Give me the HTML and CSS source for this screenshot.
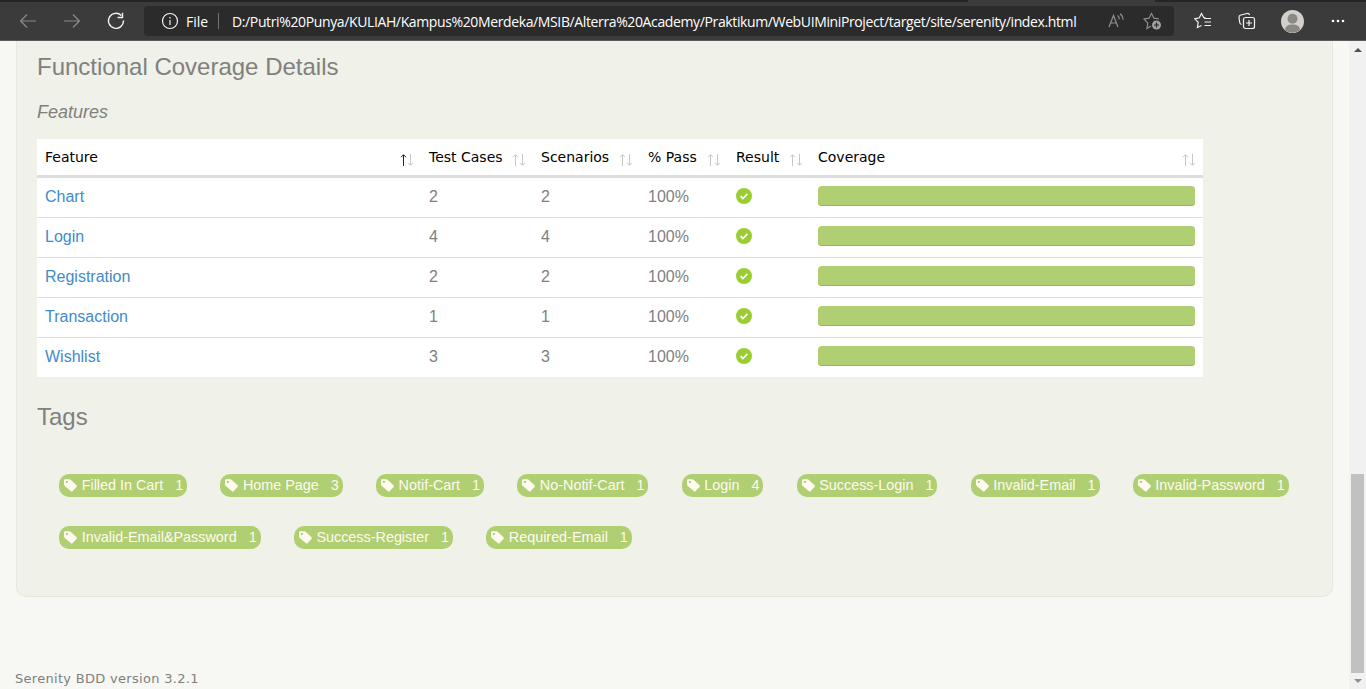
FILE: index.html
```html
<!DOCTYPE html>
<html lang="en">
<head>
<meta charset="utf-8">
<title>Serenity Reports</title>
<link rel="stylesheet" href="styles.css">
</head>
<body>
<svg class="defs" width="0" height="0">
  <symbol id="check" viewBox="0 0 16 16"><circle cx="8" cy="8" r="8"/><path d="M4.600 8.200l2.300 2.300 4.500-4.600" class="tick"/></symbol>
  <symbol id="tag" viewBox="0 0 13 13"><path fill-rule="evenodd" d="M0 1.300Q0 .2 1.200 .2h4.200q.7 0 1.200 .5l5.900 5.600q.8 .8 0 1.600l-4 4.400q-.7 .8-1.500 0L.5 6.800Q0 6.300 0 5.600zM2.900 1.800a1.100 1.100 0 1 0 .01 0z"/></symbol>
  <symbol id="sort" viewBox="0 0 13 12"><path class="asc-arrow" d="M3.500 12V1M1 3.200L3.500 .7 6 3.200"/><path d="M10.500 0v11M8 8.800l2.500 2.500L13 8.800"/></symbol>
</svg>
<header class="browser">
  <div class="tabs"><i class="tab-left"></i><i class="tab-right"></i></div>
  <div class="toolbar">
    <svg class="back" width="16" height="14" viewBox="0 0 16 14"><path d="M16 7H.7M7 .5L.7 7 7 13.500"/></svg>
    <svg class="forward" width="16" height="14" viewBox="0 0 16 14"><path d="M0 7h15.300M9 .5L15.300 7 9 13.500"/></svg>
    <svg class="reload" width="18" height="18" viewBox="0 0 18 18"><path d="M14.300 3.500A7.500 7.500 0 1 0 16.500 8.500M15.500 .8v4.700h-4.900"/></svg>
    <div class="address">
      <svg class="info" width="18" height="18" viewBox="0 0 18 18"><circle cx="9" cy="9" r="7.500"/><path d="M9 8v5M9 5v1.500"/></svg>
      <span class="scheme">File</span><i class="bar"></i>
      <span class="url">D:/Putri%20Punya/KULIAH/Kampus%20Merdeka/MSIB/Alterra%20Academy/Praktikum/WebUIMiniProject/target/site/serenity/index.html</span>
      <svg class="read" width="17" height="16" viewBox="0 0 17 16"><path d="M1 14L5.500 2.500 10 14M2.700 10h5.600M9.500 2.500q1.800 1.300 1.800 3.700M12 .8q3 2.200 3 6"/></svg>
      <svg class="fav" width="19" height="19" viewBox="0 0 19 19"><path d="M8 14l-4 2.500.8-5.300L1 7l5-.8L8.500 1.500 11 6.200l5 .8"/><circle cx="13.500" cy="13" r="4.500"/><path class="plus" d="M13.500 10.500v5M11 13h5"/></svg>
    </div>
    <svg class="favs" width="18" height="18" viewBox="0 0 18 18"><path d="M11.500 5.800l-1.800-.3L7.500 1.500 5.300 5.800.8 6.800l3.400 3.500-.8 5.200L7.500 13.500M10 6.500h7M10.500 10H17M10.500 13.500H17"/></svg>
    <svg class="collections" width="18" height="18" viewBox="0 0 18 18"><rect x="5.500" y="5.500" width="11" height="11" rx="2"/><path d="M11 8v6M8 11h6M3.500 12.500Q2 12 1.700 10.500L1 5.500Q.8 3.500 2.800 3L9 1.500q2-.3 2.600 1.500"/></svg>
    <svg class="profile" width="23" height="23" viewBox="0 0 23 23"><circle cx="11.500" cy="11.500" r="11.500" fill="#d2cfcc"/><circle cx="11.500" cy="8.800" r="5" fill="#8c8884"/><path d="M4 20q0-5.500 7.500-5.500T19 20a11.500 11.500 0 0 1-15 0z" fill="#8c8884"/></svg>
    <svg class="more" width="14" height="4" viewBox="0 0 14 4"><circle cx="2" cy="2" r="1.300"/><circle cx="7" cy="2" r="1.300"/><circle cx="12" cy="2" r="1.300"/></svg>
  </div>
</header>
<div class="viewport">
<div class="page">
  <main class="panel">
    <h3>Functional Coverage Details</h3>
    <h4>Features</h4>
    <table>
      <colgroup><col class="c1"><col class="c2"><col class="c3"><col class="c4"><col class="c5"><col></colgroup>
      <thead><tr>
        <th><div>Feature<svg class="sort asc"><use href="#sort"/></svg></div></th>
        <th><div>Test Cases<svg class="sort"><use href="#sort"/></svg></div></th>
        <th><div>Scenarios<svg class="sort"><use href="#sort"/></svg></div></th>
        <th><div>% Pass<svg class="sort"><use href="#sort"/></svg></div></th>
        <th><div>Result<svg class="sort"><use href="#sort"/></svg></div></th>
        <th><div>Coverage<svg class="sort"><use href="#sort"/></svg></div></th>
      </tr></thead>
      <tbody>
        <tr><td><a>Chart</a></td><td>2</td><td>2</td><td>100%</td><td><svg class="ok"><use href="#check"/></svg></td><td><div class="progress"></div></td></tr>
        <tr><td><a>Login</a></td><td>4</td><td>4</td><td>100%</td><td><svg class="ok"><use href="#check"/></svg></td><td><div class="progress"></div></td></tr>
        <tr><td><a>Registration</a></td><td>2</td><td>2</td><td>100%</td><td><svg class="ok"><use href="#check"/></svg></td><td><div class="progress"></div></td></tr>
        <tr><td><a>Transaction</a></td><td>1</td><td>1</td><td>100%</td><td><svg class="ok"><use href="#check"/></svg></td><td><div class="progress"></div></td></tr>
        <tr><td><a>Wishlist</a></td><td>3</td><td>3</td><td>100%</td><td><svg class="ok"><use href="#check"/></svg></td><td><div class="progress"></div></td></tr>
      </tbody>
    </table>
    <h3 class="tags-title">Tags</h3>
    <div class="tags">
      <span class="tag"><svg><use href="#tag"/></svg>Filled In Cart<em>1</em></span>
      <span class="tag"><svg><use href="#tag"/></svg>Home Page<em>3</em></span>
      <span class="tag"><svg><use href="#tag"/></svg>Notif-Cart<em>1</em></span>
      <span class="tag"><svg><use href="#tag"/></svg>No-Notif-Cart<em>1</em></span>
      <span class="tag"><svg><use href="#tag"/></svg>Login<em>4</em></span>
      <span class="tag"><svg><use href="#tag"/></svg>Success-Login<em>1</em></span>
      <span class="tag"><svg><use href="#tag"/></svg>Invalid-Email<em>1</em></span>
      <span class="tag"><svg><use href="#tag"/></svg>Invalid-Password<em>1</em></span>
      <span class="tag"><svg><use href="#tag"/></svg>Invalid-Email&amp;Password<em>1</em></span>
      <span class="tag"><svg><use href="#tag"/></svg>Success-Register<em>1</em></span>
      <span class="tag"><svg><use href="#tag"/></svg>Required-Email<em>1</em></span>
    </div>
  </main>
  <footer>Serenity BDD version 3.2.1</footer>
</div>
<aside class="scrollbar"><i class="up"></i><i class="thumb"></i><i class="down"></i></aside>
</div>
</body>
</html>
```

FILE: styles.css
```css
* { box-sizing: border-box; }
body { margin: 0; height: 689px; overflow: hidden; background: #f7f8f3; color: #808080; font: 16px "Liberation Sans", Arial, sans-serif; display: flex; flex-direction: column; }
.defs { display: none; }

.browser { height: 41px; flex: none; background: #3b3b3b; border-bottom: 1px solid #5b5b5b; }
.tabs { height: 2px; display: flex; justify-content: space-between; background: #3b3b3b; }
.tabs i { display: block; height: 2px; background: #252525; }
.tab-left { width: 968px; }
.tab-right { width: 211px; }
.toolbar { height: 38px; display: flex; align-items: center; color: #fff; }
.toolbar svg { flex: none; fill: none; stroke: #f2f2f2; stroke-width: 1.2; }
.toolbar .back { margin-left: 20px; stroke: #8a8a8a; }
.toolbar .forward { margin-left: 28px; stroke: #8a8a8a; }
.toolbar .reload { margin-left: 27px; stroke-width: 1.4; }
.address { width: 1030px; height: 30px; margin-left: 19px; border-radius: 4px; background: #2b2b2b; display: flex; align-items: center; font: 14px "Open Sans", "Noto Sans", sans-serif; white-space: nowrap; }
.address .info { margin-left: 17px; }
.scheme { width: 32px; margin-left: 7px; }
.bar { width: 1px; height: 16px; background: #777; }
.url { width: 876px; margin-left: 13px; letter-spacing: -0.375px; }
.address .read, .address .fav { stroke: #8f8f8f; }
.address .fav { margin-left: 18px; }
.fav circle { fill: #a0a0a0; stroke: none; }
.toolbar .fav .plus { stroke: #2b2b2b; }
.toolbar .favs { margin-left: 19.500px; }
.collections { margin-left: 26px; }
.toolbar .profile { margin-left: 25.500px; stroke: none; }
.toolbar .more { margin-left: 27px; fill: #fff; stroke: none; }

.viewport { flex: 1; display: flex; min-height: 0; }
.page { width: 1349px; padding-left: 16px; }
.panel { width: 1317px; height: 556px; padding: 11px 20px 0; background: #f0f1e8; border: 1px solid #e6e7e0; border-top: 0; border-radius: 0 0 10px 10px; }
h3, h4 { margin: 0; font-weight: 400; }
h3 { font-size: 24px; line-height: 30px; }
h4 { margin-top: 19px; font-size: 18px; line-height: 22px; font-style: italic; }
table { width: 1166px; margin-top: 16px; border-collapse: separate; border-spacing: 0; table-layout: fixed; background: #fff; }
.c1 { width: 384px; } .c2 { width: 112px; } .c3 { width: 107px; } .c4 { width: 88px; } .c5 { width: 82px; }
th { height: 39px; padding: 0 8px; border-bottom: 3px solid #ddd; font: 14px "DejaVu Sans", Verdana, sans-serif; color: #000; text-align: left; }
th div { display: flex; justify-content: space-between; align-items: center; white-space: nowrap; }
.sort { width: 13px; height: 12px; flex: none; margin: 5px 0 0; fill: none; stroke: #c6c6c6; --asc: #c6c6c6; }
.asc { --asc: #222; }
.asc-arrow { stroke: var(--asc); }
td { height: 40px; padding: 8px 8px 11px; border-bottom: 1px solid #ddd; line-height: 20px; vertical-align: top; }
tr:last-child td { height: 39px; border-bottom: 0; }
td:not(:last-child) { padding-top: 9px; padding-bottom: 10px; }
td a { color: #428bca; }
.ok { display: block; width: 16px; height: 16px; margin-top: 1px; fill: #9acd32; }
.tick { fill: none; stroke: #fff; stroke-width: 1.7; }
.progress { height: 20px; border-radius: 4px; background: #b0cf73; box-shadow: inset 0 -1px 0 #98b45f; }
.tags-title { margin-top: 25px; }
.tags { display: flex; flex-wrap: wrap; gap: 29.500px 33.100px; margin: 42px 0 0 22px; width: 1250px; }
.tag { height: 22.500px; padding: 0 4px 0 5px; border-radius: 10px; background: #b0cf73; color: #fffaf0; font-size: 14.400px; letter-spacing: -0.010px; display: flex; align-items: center; white-space: nowrap; }
.tag svg { width: 13px; height: 13px; margin-right: 4.700px; fill: #fffaf0; }
.tag em { margin-left: 12px; font-style: normal; }
footer { margin: 73px 0 0 -1px; font: 13px/18px "DejaVu Sans", Verdana, sans-serif; letter-spacing: 0.300px; }
.scrollbar { width: 17px; background: #f1f1f1; display: flex; flex-direction: column; align-items: center; }
.up { margin-top: 7px; border: 4px solid transparent; border-top: 0; border-bottom-color: #505050; }
.thumb { width: 13px; height: 199px; margin-top: 422px; background: #c1c1c1; }
.down { margin-top: 6px; border: 4px solid transparent; border-bottom: 0; border-top-color: #909090; }
```
